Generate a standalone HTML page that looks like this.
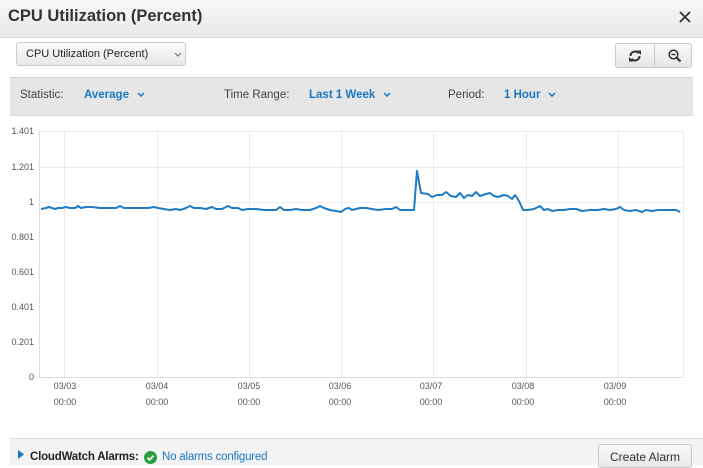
<!DOCTYPE html>
<html><head><style>
body{margin:0;width:703px;height:464px;overflow:hidden;background:#fff;font-family:"Liberation Sans",Arial,sans-serif;position:relative}
.abs{position:absolute}
.title{left:0;top:0;width:703px;height:37px;background:linear-gradient(#f6f6f6,#e9e9e9);border-bottom:1px solid #d8d8d8}
.title span{position:absolute;left:8px;top:7px;font-size:16.5px;font-weight:bold;color:#333}
.sel{left:16px;top:42px;width:170px;height:24px;border:1px solid #ccc;border-radius:3px;background:linear-gradient(#fafafa,#e8e8e8);font-size:11px;color:#222;box-sizing:border-box;padding:5px 0 0 9px}
.btns{left:615px;top:43px;width:77px;height:25px;border:1px solid #c8c8c8;border-radius:3px;background:linear-gradient(#fafafa,#e6e6e6);box-sizing:border-box}
.bar{left:10px;top:77px;width:683px;height:37px;background:#e6e6e6;border-top:1px solid #d0d0d0;border-bottom:1px solid #d8d8d8;font-size:11.5px}
.bar span{position:absolute;top:11px}
.lbl{color:#444}.val{color:#1a78c2;font-weight:bold}
.foot{left:10px;top:438px;width:693px;height:26px;background:#f3f3f3;border-top:1px solid #dcdcdc}
</style></head><body>
<div class="abs title"><span>CPU Utilization (Percent)</span></div>
<svg class="abs" style="left:679px;top:11px" width="12" height="12"><path d="M1 1L11 11M11 1L1 11" stroke="#333" stroke-width="1.8"/></svg>
<div class="abs sel">CPU Utilization (Percent)</div>
<svg class="abs" style="left:174px;top:52px" width="8" height="5"><path d="M1 1l3 3 3-3" stroke="#777" fill="none" stroke-width="1.2"/></svg>
<div class="abs btns">
<div class="abs" style="left:38px;top:0;width:1px;height:23px;background:#c8c8c8"></div>
<svg class="abs" style="left:11px;top:4px" width="16" height="16" viewBox="0 0 16 16"><path d="M3.5 8a4.5 4.5 0 0 1 8-2.8" fill="none" stroke="#333" stroke-width="2"/><path d="M12.5 8a4.5 4.5 0 0 1-8 2.8" fill="none" stroke="#333" stroke-width="2"/><path d="M9.5 2.5h4.5v4.5z" fill="#333"/><path d="M6.5 13.5h-4.5v-4.5z" fill="#333"/></svg>
<svg class="abs" style="left:51px;top:4px" width="16" height="16" viewBox="0 0 16 16"><circle cx="6.5" cy="6.5" r="4.3" fill="none" stroke="#333" stroke-width="1.6"/><path d="M9.5 9.5l4 4" stroke="#333" stroke-width="2.2"/><path d="M4.5 6.5h4" stroke="#333" stroke-width="1.4"/></svg>
</div>
<div class="abs bar">
<span class="lbl" style="left:10px">Statistic:</span><span class="val" style="left:74px">Average</span>
<span class="lbl" style="left:214px">Time Range:</span><span class="val" style="left:299px">Last 1 Week</span>
<span class="lbl" style="left:438px">Period:</span><span class="val" style="left:494px">1 Hour</span>
<svg class="abs" style="left:127px;top:14px" width="8" height="5"><path d="M1 1l3 3 3-3" stroke="#1a78c2" fill="none" stroke-width="1.5"/></svg>
<svg class="abs" style="left:373px;top:14px" width="8" height="5"><path d="M1 1l3 3 3-3" stroke="#1a78c2" fill="none" stroke-width="1.5"/></svg>
<svg class="abs" style="left:538px;top:14px" width="8" height="5"><path d="M1 1l3 3 3-3" stroke="#1a78c2" fill="none" stroke-width="1.5"/></svg>
</div>
<svg class="abs" style="left:0;top:0" width="703" height="440">
<g stroke="#ececec" stroke-width="1">
<line x1="39" y1="131.5" x2="683" y2="131.5"/><line x1="39" y1="167.5" x2="683" y2="167.5"/><line x1="39" y1="202.5" x2="683" y2="202.5"/>
<line x1="64.5" y1="131" x2="64.5" y2="377"/><line x1="157.5" y1="131" x2="157.5" y2="377"/><line x1="249.5" y1="131" x2="249.5" y2="377"/><line x1="341.5" y1="131" x2="341.5" y2="377"/><line x1="433.5" y1="131" x2="433.5" y2="377"/><line x1="526.5" y1="131" x2="526.5" y2="377"/><line x1="618.5" y1="131" x2="618.5" y2="377"/><line x1="683.5" y1="131" x2="683.5" y2="377"/>
</g>
<line x1="39.5" y1="131" x2="39.5" y2="377" stroke="#ddd"/>
<line x1="39" y1="377.5" x2="683" y2="377.5" stroke="#ddd"/>
<polyline fill="none" stroke="#1e7bc4" stroke-width="2" stroke-linejoin="round" points="41,209 46,208 49,207 52,208 55,209 58,208 62,208 66,207 70,208 75,208 78,206 81,208 86,207 92,207 100,208 108,208 116,208 120,206 124,208 132,208 142,208 148,208 154,207 158,208 164,209 170,210 176,209 180,210 186,208 190,206 194,208 200,208 206,209 212,207 216,209 222,209 228,206 232,208 238,208 242,210 248,209 256,209 264,210 270,210 276,210 280,207 284,210 290,210 296,209 302,210 310,210 316,208 320,206 324,208 330,210 336,211 341,212 345,209 349,208 352,210 356,209 360,208 366,208 372,209 378,210 386,209 392,209 396,207 400,210 406,210 414,210 417,171 421,193 428,194 432,197 437,195 442,195 446,192 451,196 456,197 460,193 464,198 468,195 472,196 476,192 480,196 486,194 490,193 494,196 498,197 504,195 508,196 512,199 515,195 519,201 523,210 528,210 534,209 540,206 544,210 548,209 552,211 558,210 564,210 570,209 576,209 582,211 590,210 598,210 604,209 610,210 616,209 620,207 624,210 630,211 636,210 642,212 646,210 652,211 658,210 664,210 670,210 676,210 680,212"/>
<g text-anchor="end" font-family="Liberation Sans" font-size="9" fill="#555">
<text x="34" y="134">1.401</text><text x="34" y="170">1.201</text><text x="34" y="205">1</text><text x="34" y="240">0.801</text><text x="34" y="275">0.601</text><text x="34" y="310">0.401</text><text x="34" y="345">0.201</text><text x="34" y="380">0</text>
</g>
<g font-family="Liberation Sans" font-size="9" fill="#555" text-anchor="middle">
<text x="65" y="389">03/03</text><text x="65" y="405">00:00</text>
<text x="157" y="389">03/04</text><text x="157" y="405">00:00</text>
<text x="249" y="389">03/05</text><text x="249" y="405">00:00</text>
<text x="340" y="389">03/06</text><text x="340" y="405">00:00</text>
<text x="431" y="389">03/07</text><text x="431" y="405">00:00</text>
<text x="523" y="389">03/08</text><text x="523" y="405">00:00</text>
<text x="615" y="389">03/09</text><text x="615" y="405">00:00</text>
</g>
</svg>
<div class="abs foot">
<svg class="abs" style="left:8px;top:11px" width="6" height="9"><path d="M0 0L6 4.5L0 9z" fill="#1a78c2"/></svg>
<span class="abs" style="left:20px;top:12px;font-size:11.5px;font-weight:bold;color:#222;letter-spacing:-0.2px">CloudWatch Alarms:</span>
<svg class="abs" style="left:134px;top:12px" width="13" height="13"><circle cx="6.5" cy="6.5" r="6.5" fill="#2a9d3c"/><path d="M3.5 6.8l2 2 4-4" stroke="#fff" stroke-width="1.8" fill="none"/></svg>
<span class="abs" style="left:152px;top:12px;font-size:11.5px;color:#1a78c2;letter-spacing:-0.2px">No alarms configured</span>
<div class="abs" style="left:588px;top:5px;width:94px;height:24px;border:1px solid #c8c8c8;border-radius:3px;background:linear-gradient(#fafafa,#e8e8e8);box-sizing:border-box;font-size:12px;color:#333;text-align:center;padding-top:5px">Create Alarm</div>
</div>
</body></html>
